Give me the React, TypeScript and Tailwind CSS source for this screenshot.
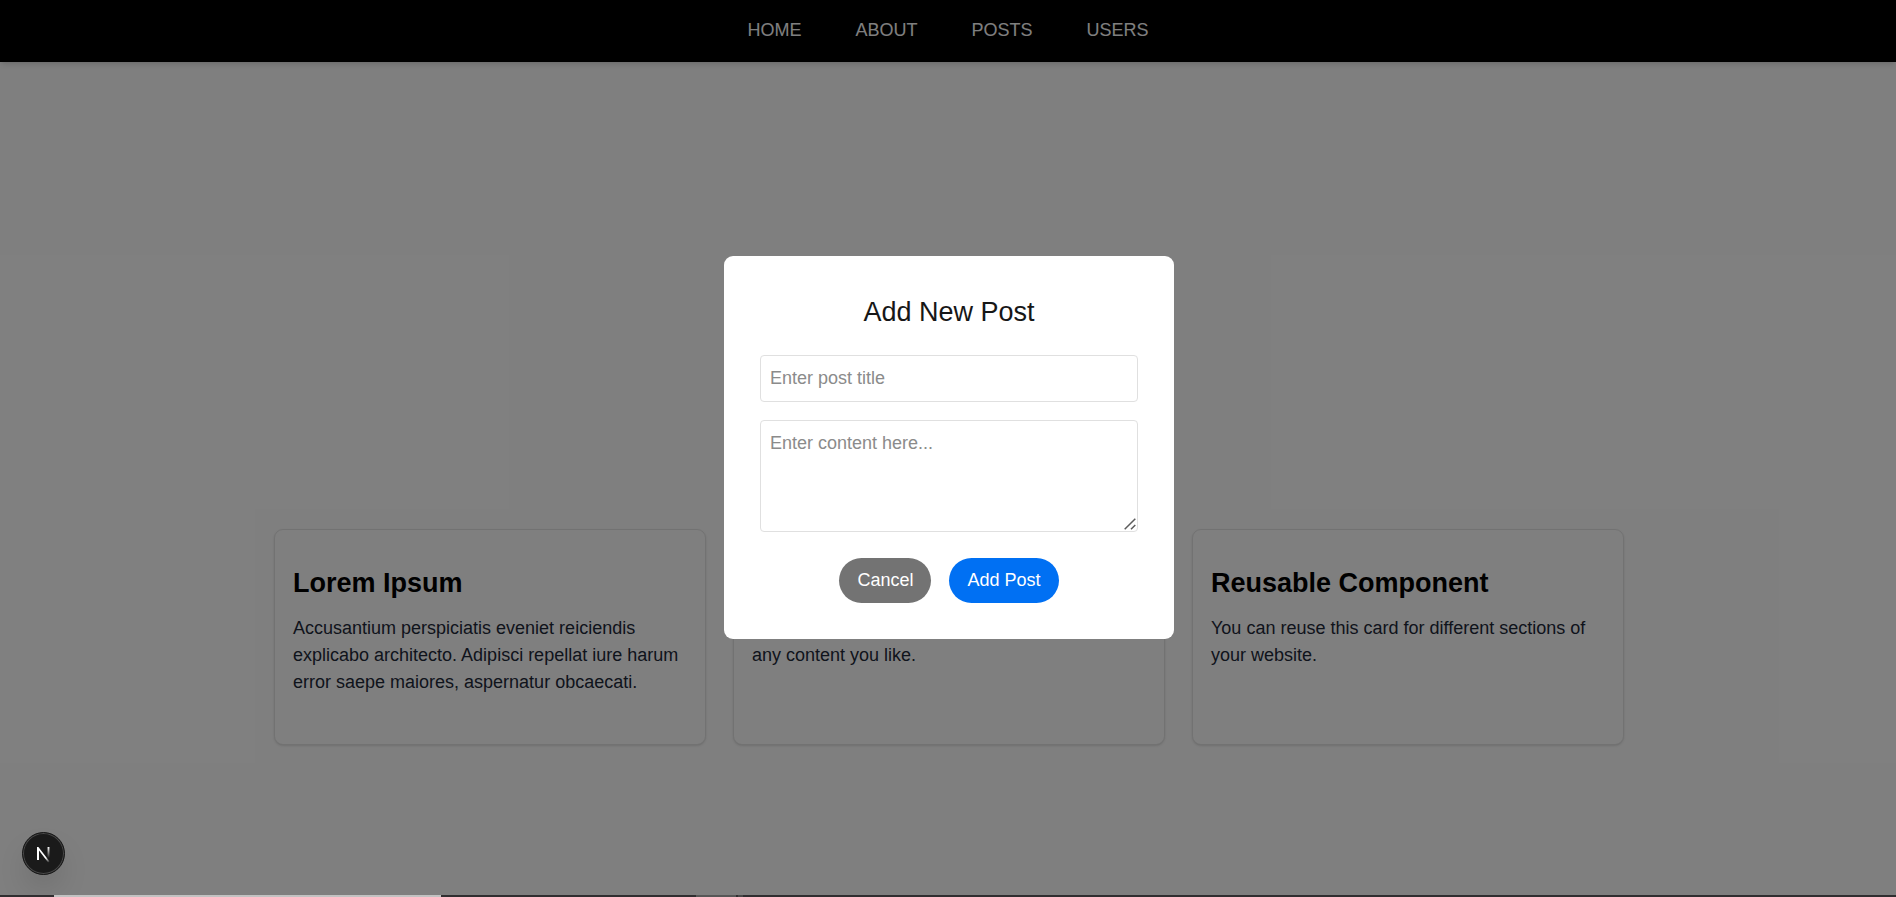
import React from "react";

const links = ["HOME", "ABOUT", "POSTS", "USERS"];

const cards = [
  {
    title: "Lorem Ipsum",
    text: "Accusantium perspiciatis eveniet reiciendis explicabo architecto. Adipisci repellat iure harum error saepe maiores, aspernatur obcaecati.",
  },
  {
    title: "Card",
    text: "This reusable card component can also display any content you like.",
  },
  {
    title: "Reusable Component",
    text: "You can reuse this card for different sections of your website.",
  },
];

function Navbar() {
  return (
    <header className="bg-black pt-[17px] pb-[18px] shadow-md">
      <nav className="flex justify-center gap-[54px]">
        {links.map((label) => (
          <a key={label} href={`#${label.toLowerCase()}`} className="text-white">
            {label}
          </a>
        ))}
      </nav>
    </header>
  );
}

function Card({ title, text }: { title: string; text: string }) {
  return (
    <article className="min-h-[216px] rounded-[9px] border border-[#e5e5e5] bg-white px-[18px] pt-[35px] shadow-sm">
      <h2 className="mb-[14px] text-[27px] leading-9 font-bold text-black">{title}</h2>
      <p className="text-gray-800">{text}</p>
    </article>
  );
}

function AddPostDialog() {
  return (
    <div className="absolute inset-0 flex items-center justify-center bg-black/50 pl-0.5">
      <form
        role="dialog"
        aria-labelledby="dialog-title"
        onSubmit={(event) => event.preventDefault()}
        className="w-full max-w-[450px] rounded-[9px] bg-white p-9"
      >
        <h2 id="dialog-title" className="mb-[23px] text-center text-[27px] leading-10 text-[#171717]">
          Add New Post
        </h2>
        <input
          type="text"
          aria-label="Post title"
          placeholder="Enter post title"
          className="mb-[18px] block w-full rounded-[4px] border border-[#e0e0e0] p-[9px] placeholder:text-[#8b8b8b]"
        />
        <div className="relative mb-[26px]">
          <textarea
            aria-label="Post content"
            placeholder="Enter content here..."
            className="block h-28 w-full resize-none rounded-[4px] border border-[#e0e0e0] p-[9px] placeholder:text-[#8b8b8b]"
          />
          <svg
            width="12"
            height="12"
            viewBox="0 0 12 12"
            fill="none"
            stroke="#5c5c5c"
            strokeWidth="1.5"
            className="pointer-events-none absolute right-0.5 bottom-0.5"
          >
            <path d="M0.7 11.3L11.3 0.7M7 11.3L11.3 7" />
          </svg>
        </div>
        <div className="flex justify-center gap-[18px]">
          <button type="button" className="rounded-full bg-[#737373] px-[18px] py-[9px] text-white">
            Cancel
          </button>
          <button type="submit" className="rounded-full bg-[#0070f3] px-[18px] py-[9px] text-white">
            Add Post
          </button>
        </div>
      </form>
    </div>
  );
}

function DevToolsButton() {
  return (
    <button
      type="button"
      aria-label="Open Next.js dev tools"
      className="absolute bottom-5 left-[22px] flex size-[43px] items-center justify-center rounded-full border border-[#171717] bg-[#1a1a1a] shadow-[inset_0_0_0_1px_#4a4a4a,0_16px_32px_-8px_rgba(0,0,0,0.24)]"
    >
      <svg width="17" height="19" viewBox="0 0 17 19" fill="none">
        <defs>
          <linearGradient id="n-diagonal" x1="9" y1="10" x2="15" y2="18" gradientUnits="userSpaceOnUse">
            <stop offset="0.4" stopColor="#fff" />
            <stop offset="1" stopColor="#fff" stopOpacity="0" />
          </linearGradient>
          <linearGradient id="n-stem" x1="13" y1="3" x2="13" y2="14" gradientUnits="userSpaceOnUse">
            <stop stopColor="#fff" />
            <stop offset="1" stopColor="#fff" stopOpacity="0" />
          </linearGradient>
        </defs>
        <path d="M2 16V3H3.4L14.6 17.4L13.2 18.4L4 6.4V16Z" fill="url(#n-diagonal)" />
        <path d="M13.5 3V14" stroke="url(#n-stem)" strokeWidth="1.9" />
      </svg>
    </button>
  );
}

function BottomStrip() {
  return (
    <div className="flex h-0.5 shrink-0 bg-[#302e30]">
      <div className="ml-[54px] w-[387px] bg-[#c2c2c2]" />
      <div className="ml-[255px] w-10 bg-[#575757]" />
      <div className="ml-0.5 w-[5px] bg-[#484848]" />
    </div>
  );
}

export default function App() {
  return (
    <div className="flex h-screen flex-col font-['Liberation_Sans',Arial,sans-serif] text-[18px] leading-[27px]">
      <div className="relative flex min-h-0 flex-1 flex-col overflow-hidden bg-white">
        <Navbar />
        <main className="flex flex-1 flex-col justify-end pb-[150px] pl-0.5">
          <section className="mx-auto grid w-full max-w-[1350px] grid-cols-3 gap-[27px]">
            {cards.map((card) => (
              <Card key={card.title} {...card} />
            ))}
          </section>
        </main>
        <AddPostDialog />
        <DevToolsButton />
      </div>
      <BottomStrip />
    </div>
  );
}
